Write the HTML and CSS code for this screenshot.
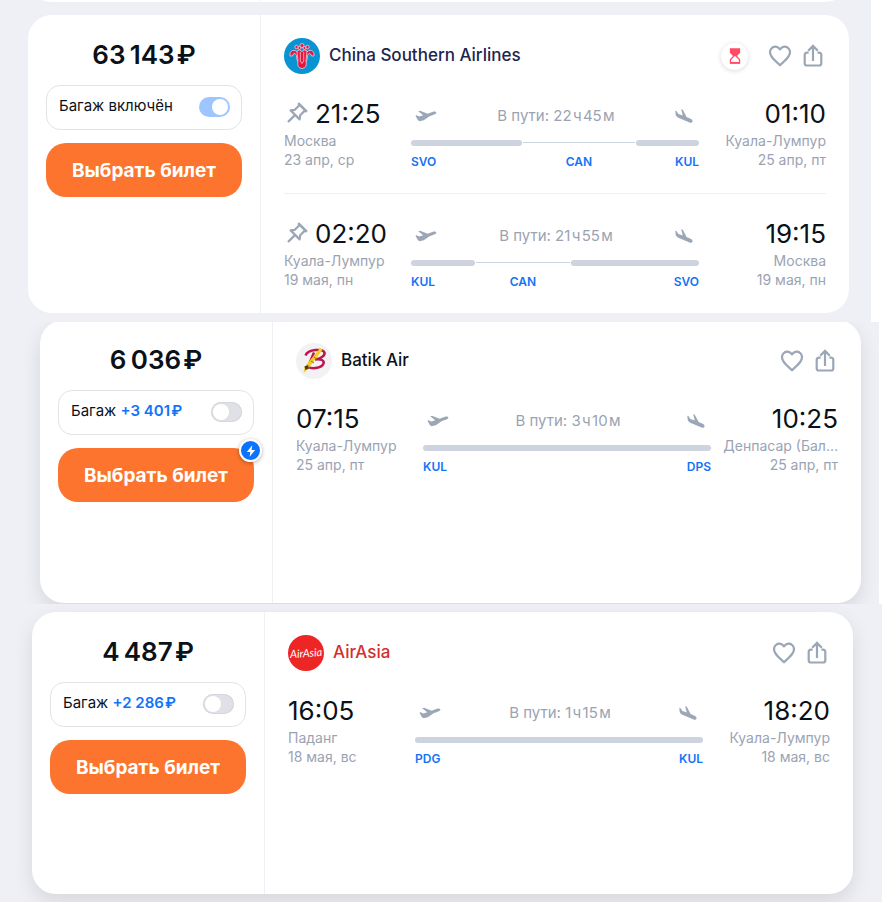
FILE: index.html
```html
<!DOCTYPE html>
<html lang="ru">
<head>
<meta charset="utf-8">
<meta name="viewport" content="width=device-width, initial-scale=1">
<title>Авиабилеты</title>
<link rel="stylesheet" href="styles.css">
</head>
<body>
<svg class="sprite" aria-hidden="true">
  <symbol id="pin" viewBox="0 0 24 24"><path d="M14.3 3.2 20.8 9.7 19 10.4 15.2 14.2 14.6 18.4 5.6 9.4 9.8 8.8 13.6 5z" fill="none" stroke="currentColor" stroke-width="2.2" stroke-linejoin="round"/><path d="M13.2 2.1 21.9 10.8M10 14 3 21" fill="none" stroke="currentColor" stroke-width="2.4"/></symbol>
  <symbol id="takeoff" viewBox="0 0 22 12"><path d="M.4 5.6 1.6 5.2 4.4 6.4 8.2 5.2 3.2 1.2 5 .8 12.600 3.700 18 1.800C19.600 1.200 20.900 1.300 21.300 2.200 21.600 3.100 20.700 3.900 19.300 4.400L14.500 6.200 8.800 10.200 4.400 11.200 2.800 10Z" fill="currentColor"/></symbol>
  <symbol id="landing" viewBox="0 0 18 14"><path d="M.3 1.7 1.4 2.1 3.4 5.1 7.8 6.400 6.200.2 7.800.7 11.600 7.900 15.600 9.800C17 10.500 17.900 11.700 17.500 12.800 17.100 13.800 16 13.900 14.600 13.400L5.700 9.800C3 8.600.900 7.600.700 5.700Z" fill="currentColor"/></symbol>
  <symbol id="heart" viewBox="0 0 24 24"><path d="M12 21.300C10.500 19.600 5.500 15.700 3.300 12.100 1.700 9.400 1.700 6.500 3.300 4.600 5.700 1.700 9.800 2.100 12 5.400 14.200 2.100 18.300 1.700 20.700 4.600 22.300 6.500 22.300 9.400 20.700 12.100 18.500 15.700 13.500 19.600 12 21.300Z" fill="none" stroke="currentColor" stroke-width="2.200" stroke-linejoin="round"/></symbol>
  <symbol id="share" viewBox="0 0 24 24"><path d="M7.600 8.700H6Q3.700 8.700 3.700 11V19.200Q3.700 21.500 6 21.500H18Q20.300 21.500 20.300 19.200V11Q20.300 8.700 18 8.700H16.400M12 17V2.500M7.200 6.700 12 1.900 16.800 6.700" fill="none" stroke="currentColor" stroke-width="2.200"/></symbol>
</svg>

<section class="strip strip-first">
  <div class="card card-previous"><div class="offer"></div></div>
  <article class="card">
    <div class="offer">
      <div class="price">63&#8201;143&#8202;₽</div>
      <label class="baggage"><span>Багаж включён</span><input class="toggle" type="checkbox" checked disabled></label>
      <button class="buy" type="button">Выбрать билет</button>
    </div>
    <div class="details">
      <header class="head">
        <svg class="logo" viewBox="0 0 36 36" aria-hidden="true"><circle cx="18" cy="18" r="18" fill="#0894d2"/><g fill="#e5173f" stroke="#f6c9d5" stroke-width=".8"><path d="M6 18C5 12 11 10.500 14 15L15 25Q12 22 12.500 17.500 10 13 8.500 18ZM30 18C31 12 25 10.500 22 15L21 25Q24 22 23.500 17.500 26 13 27.500 18Z"/><path d="M13 13 15.500 12 18 13.500 20.500 12 23 13 22 23Q23.500 30 18 30.500 12.500 30 14 23Z"/><path d="M16.300 14V23L18 25.500 19.700 23V14" fill="none"/><circle cx="12.500" cy="9" r="1.700"/><circle cx="15.500" cy="10" r="1.500"/><circle cx="18" cy="7.500" r="2"/><circle cx="20.500" cy="10" r="1.500"/><circle cx="23.500" cy="9" r="1.700"/></g></svg>
        <h2 class="airline airline-navy">China Southern Airlines</h2>
        <span class="hourglass"><svg viewBox="0 0 12 16" aria-hidden="true"><path d="M1.500 1H10.500V4.500L7 8 10.500 11.500V15H1.500V11.500L5 8 1.500 4.500Z" fill="none" stroke="#ff4b65" stroke-width="1.300"/><path d="M1.500 1H10.500V4.500L7 8H5L1.500 4.500ZM1 14H11V15.500H1Z" fill="#ff4b65"/></svg></span>
        <button class="icon" type="button" aria-label="В избранное"><svg><use href="#heart"/></svg></button>
        <button class="icon" type="button" aria-label="Поделиться"><svg><use href="#share"/></svg></button>
      </header>
      <div class="flight">
        <div class="point">
          <div class="time"><svg class="pin"><use href="#pin"/></svg>21:25</div>
          <div class="place">Москва</div><div class="place">23 апр, ср</div>
        </div>
        <div class="route">
          <div class="summary"><svg class="plane"><use href="#takeoff"/></svg><span>В пути: 22&#8202;ч&#8202;45&#8202;м</span><svg class="plane plane-down"><use href="#landing"/></svg></div>
          <div class="track track-out"><span class="leg">SVO</span><span class="stop">CAN</span><span class="leg leg-last">KUL</span></div>
        </div>
        <div class="point point-end"><div class="time">01:10</div><div class="place">Куала-Лумпур</div><div class="place">25 апр, пт</div></div>
      </div>
      <div class="flight flight-return">
        <div class="point">
          <div class="time"><svg class="pin"><use href="#pin"/></svg>02:20</div>
          <div class="place">Куала-Лумпур</div><div class="place">19 мая, пн</div>
        </div>
        <div class="route">
          <div class="summary"><svg class="plane"><use href="#takeoff"/></svg><span>В пути: 21&#8202;ч&#8202;55&#8202;м</span><svg class="plane plane-down"><use href="#landing"/></svg></div>
          <div class="track track-back"><span class="leg">KUL</span><span class="stop">CAN</span><span class="leg leg-last">SVO</span></div>
        </div>
        <div class="point point-end"><div class="time">19:15</div><div class="place">Москва</div><div class="place">19 мая, пн</div></div>
      </div>
    </div>
  </article>
</section>

<section class="strip strip-second">
  <article class="card card-raised">
    <div class="offer">
      <div class="price">6&#8201;036&#8202;₽</div>
      <label class="baggage"><span>Багаж <b>+3 401&#8202;₽</b></span><input class="toggle" type="checkbox"></label>
      <button class="buy" type="button">Выбрать билет<span class="bolt"><svg viewBox="0 0 12 16" aria-hidden="true"><path d="M7.500 1 1 9.200H5.200L4.300 15 11 6.700H6.700Z" fill="#fff"/></svg></span></button>
    </div>
    <div class="details">
      <header class="head">
        <svg class="logo" viewBox="0 0 36 36" aria-hidden="true"><circle cx="18" cy="18" r="18" fill="#f2f2f4"/><path d="M9.500 12.500C12 6 27 5.500 28.500 9.500 29.500 13 24 15.500 19 16.500 25 15.500 28.500 17.500 27.500 20.500 26 24.500 17 27 11.500 23.500" fill="none" stroke="#bd164f" stroke-width="2.500"/><path d="M18 9.500 12 24" stroke="#bd164f" stroke-width="2.500"/><path d="M24 5 26.500 7 12 26 7.500 30 8.500 24Z" fill="#f5cd20"/><path d="M8.500 23.500 12 22 13 25.500 9.500 27Z" fill="#513719"/><path d="M15 18 18 20M18 14 21 16" stroke="#a26c1c" stroke-width="1"/></svg>
        <h2 class="airline">Batik Air</h2>
        <button class="icon" type="button" aria-label="В избранное"><svg><use href="#heart"/></svg></button>
        <button class="icon" type="button" aria-label="Поделиться"><svg><use href="#share"/></svg></button>
      </header>
      <div class="flight">
        <div class="point"><div class="time">07:15</div><div class="place">Куала-Лумпур</div><div class="place">25 апр, пт</div></div>
        <div class="route">
          <div class="summary"><svg class="plane"><use href="#takeoff"/></svg><span>В пути: 3&#8202;ч&#8202;10&#8202;м</span><svg class="plane plane-down"><use href="#landing"/></svg></div>
          <div class="track"><span class="leg leg-direct"><span>KUL</span><span>DPS</span></span></div>
        </div>
        <div class="point point-end"><div class="time">10:25</div><div class="place">Денпасар (Бал...</div><div class="place">25 апр, пт</div></div>
      </div>
    </div>
  </article>
</section>

<section class="strip strip-third">
  <article class="card card-raised">
    <div class="offer">
      <div class="price">4&#8201;487&#8202;₽</div>
      <label class="baggage"><span>Багаж <b>+2 286&#8202;₽</b></span><input class="toggle" type="checkbox"></label>
      <button class="buy" type="button">Выбрать билет</button>
    </div>
    <div class="details">
      <header class="head">
        <svg class="logo" viewBox="0 0 36 36" aria-hidden="true"><circle cx="18" cy="18" r="18" fill="#ee2525"/><text class="logo-text" x="18" y="22" text-anchor="middle" transform="rotate(-4 18 18)">AirAsia</text></svg>
        <h2 class="airline airline-red">AirAsia</h2>
        <button class="icon" type="button" aria-label="В избранное"><svg><use href="#heart"/></svg></button>
        <button class="icon" type="button" aria-label="Поделиться"><svg><use href="#share"/></svg></button>
      </header>
      <div class="flight">
        <div class="point"><div class="time">16:05</div><div class="place">Паданг</div><div class="place">18 мая, вс</div></div>
        <div class="route">
          <div class="summary"><svg class="plane"><use href="#takeoff"/></svg><span>В пути: 1&#8202;ч&#8202;15&#8202;м</span><svg class="plane plane-down"><use href="#landing"/></svg></div>
          <div class="track"><span class="leg leg-direct"><span>PDG</span><span>KUL</span></span></div>
        </div>
        <div class="point point-end"><div class="time">18:20</div><div class="place">Куала-Лумпур</div><div class="place">18 мая, вс</div></div>
      </div>
    </div>
  </article>
</section>
</body>
</html>
```
FILE: styles.css
```css
* { box-sizing: border-box; }

body {
  margin: 0;
  background: #fff;
  color: #0b1118;
  font-family: Inter, Roboto, sans-serif;
}

button { font: inherit; border: 0; padding: 0; cursor: pointer; }

.sprite { display: none; }

.strip { background: #eff0f5; overflow: hidden; }
.strip-first { margin-right: 11px; padding: 0 22px 9px 28px; }
.strip-second { margin-right: 3px; padding: 0 18px 1px 40px; }
.strip-third { padding: 8px 29px 8px 32px; }

.card {
  display: grid;
  grid-template-columns: 233px minmax(0, 1fr);
  min-height: 282px;
  background: #fff;
  border-radius: 24px;
}
.card-raised { box-shadow: 0 8px 20px rgba(0, 0, 0, 0.1); }
.card-previous { min-height: 48px; margin: -46px 0 13px; }
.strip-second .card { margin-top: -2px; min-height: 283px; }

.offer {
  padding: 22px 18px;
  border-right: 1px solid #eff0f3;
}
.price {
  margin-bottom: 12px;
  font-size: 26px;
  font-weight: 600;
  line-height: 36px;
  text-align: center;
}
.baggage {
  display: flex;
  align-items: center;
  justify-content: space-between;
  height: 45px;
  margin-bottom: 13px;
  padding: 0 11px 2px;
  border: 1px solid #e2e3e6;
  border-radius: 14px;
  font-size: 15px;
  line-height: 20px;
}
.baggage span { padding: 0 1px 2px; }
.baggage b { color: #1373f8; font-weight: 600; }

.toggle {
  appearance: none;
  width: 31px;
  height: 20px;
  margin: 0;
  padding: 2px;
  border-radius: 10px;
  background: #e0e1e6;
  box-shadow: inset 0 0 0 1px #d5d6db;
}
.toggle::before {
  content: "";
  display: block;
  width: 16px;
  height: 16px;
  border-radius: 50%;
  background: #fff;
}
.toggle:checked { background: #9ec5ff; box-shadow: none; }
.toggle:checked::before { margin-left: auto; }

.buy {
  position: relative;
  width: 100%;
  height: 54px;
  border-radius: 20px;
  background: #fc742d;
  color: #fff;
  font-size: 19px;
  font-weight: 700;
}
.bolt {
  position: absolute;
  top: -9px;
  right: -8px;
  display: grid;
  place-items: center;
  width: 23px;
  height: 23px;
  border: 2px solid #fff;
  border-radius: 50%;
  background: #0c73fe;
  box-shadow: 0 1px 4px rgba(0, 0, 0, 0.3);
}
.bolt svg { width: 10px; height: 14px; }

.details { padding: 23px; }

.head { display: flex; align-items: center; }
.logo { flex: none; width: 36px; height: 36px; }
.logo-text { fill: #fff; font: italic 400 11px Lato, sans-serif; }
.airline {
  flex: 1;
  margin: 0 0 0 9px;
  padding-bottom: 2px;
  font-size: 17px;
  font-weight: 500;
  line-height: 24px;
}
.airline-navy { color: #1e2550; }
.airline-red { color: #d3302f; }
.hourglass {
  display: grid;
  place-items: center;
  width: 27px;
  height: 27px;
  margin-right: 11px;
  border-radius: 50%;
  background: #fff;
  box-shadow: 0 1px 5px rgba(0, 0, 0, 0.15);
}
.hourglass svg { width: 12px; height: 16px; }
.icon {
  width: 24px;
  height: 24px;
  margin-left: 9px;
  background: none;
  color: #9ba7b6;
}
.icon:last-child { margin-right: 1px; }
.icon svg { display: block; width: 24px; height: 24px; }

.flight {
  display: grid;
  grid-template-columns: 118px minmax(0, 1fr) 118px;
  gap: 9px;
  margin-top: 23px;
}
.flight-return { padding-top: 23px; border-top: 1px solid #eff0f3; }
.time {
  display: flex;
  align-items: center;
  height: 34px;
  padding-bottom: 2px;
  font-size: 26px;
}
.pin, .plane { color: #9ba7b6; }
.pin { width: 24px; height: 24px; margin: 0 6px 0 1px; }
.place {
  color: #9ba3b3;
  font-size: 14px;
  line-height: 19px;
  white-space: nowrap;
}
.point-end { text-align: right; }
.point-end .time { justify-content: flex-end; }

.summary {
  display: flex;
  align-items: center;
  justify-content: space-between;
  height: 43px;
  padding: 0 6px 6px 4px;
  color: #9ba3b3;
  font-size: 15px;
}
.plane { width: 22px; height: 12px; }
.plane-down { width: 18px; height: 14px; }

.track {
  display: grid;
  gap: 1px;
  color: #1373f8;
  font-size: 12px;
  font-weight: 600;
  line-height: 16px;
}
.track-out { grid-template-columns: 111fr 112fr 63fr; }
.track-back { grid-template-columns: 64fr 94fr 128fr; }
.leg::before, .stop::before {
  content: "";
  display: block;
  height: 6px;
  margin-bottom: 8px;
  border-radius: 3px;
  background: #cdd3df;
}
.stop { text-align: center; }
.stop::before {
  height: 1px;
  margin: 2px 0 11px;
  border-radius: 0;
}
.leg-last { text-align: right; }
.leg-direct {
  display: flex;
  flex-wrap: wrap;
  justify-content: space-between;
}
.leg-direct::before { width: 100%; }
```
